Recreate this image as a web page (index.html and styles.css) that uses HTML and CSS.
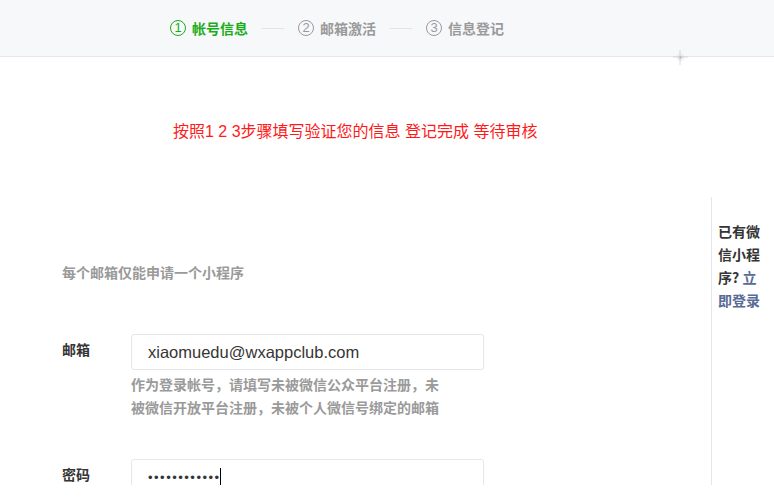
FILE: index.html
```html
<!DOCTYPE html>
<html lang="zh-CN">
<head>
  <meta charset="UTF-8">
  <title>小程序注册</title>
  <link rel="stylesheet" href="styles.css">
</head>
<body>
  <div class="page">
    <div class="steps">
      <div class="step active"><span class="num">1</span>帐号信息</div>
      <div class="step-line"></div>
      <div class="step"><span class="num">2</span>邮箱激活</div>
      <div class="step-line"></div>
      <div class="step"><span class="num">3</span>信息登记</div>
      <div class="sparkle"></div>
    </div>

    <p class="notice">按照1 2 3步骤填写验证您的信息 登记完成 等待审核</p>

    <div class="main">
      <div class="form">
        <p class="tips">每个邮箱仅能申请一个小程序</p>

        <div class="form-row">
          <label for="email">邮箱</label>
          <div class="field">
            <input type="text" id="email" value="xiaomuedu@wxappclub.com">
            <p class="hint">作为登录帐号，请填写未被微信公众平台注册，未被微信开放平台注册，未被个人微信号绑定的邮箱</p>
          </div>
        </div>

        <div class="form-row">
          <label for="pwd">密码</label>
          <div class="field">
            <div class="input pwd">••••••••••••<span class="caret"></span></div>
          </div>
        </div>
      </div>

      <div class="side">
        已有微信小程序?<a href="#"> 立即登录</a>
      </div>
    </div>
  </div>
</body>
</html>
```

FILE: styles.css
```css
html, body { margin: 0; background: #fff; }
body { font-family: "Liberation Sans", "Noto Sans CJK SC", sans-serif; color: #353535; }
.page { height: 485px; overflow: hidden; }

.steps { position: relative; height: 56px; background: #f7f8fa; border-bottom: 1px solid #e7e7eb; display: flex; align-items: center; padding-left: 170px; }
.step { display: flex; align-items: center; font-size: 14px; font-weight: bold; color: #9a9a9a; font-family: "Noto Sans CJK SC", sans-serif; }
.step.active { color: #1aad19; }
.num { width: 14px; height: 14px; border: 1.5px solid currentColor; border-radius: 50%; font-size: 13px; font-weight: normal; line-height: 14px; text-align: center; margin-right: 6px; font-family: "Liberation Sans", sans-serif; }
.step-line { width: 22px; height: 1px; background: #e4e4e8; margin: 0 14px; }
.sparkle { position: absolute; left: 673px; top: 50px; width: 15px; height: 15px;
  background: radial-gradient(circle, rgba(170,170,180,0.8) 0, rgba(200,200,210,0.3) 2px, transparent 5px),
    linear-gradient(to right, transparent 6px, rgba(200,200,210,0.7) 7px, transparent 8px),
    linear-gradient(to bottom, transparent 6px, rgba(200,200,210,0.7) 7px, transparent 8px); }

.notice { margin: 63px 0 53px 173px; font-size: 16px; line-height: 24px; color: #ff1a1a; font-family: "Liberation Sans", "Noto Sans CJK SC", sans-serif; }

.main { display: flex; }
.form { width: 649px; padding-left: 62px; }
.tips { margin: 65px 0 52px; font-size: 14px; line-height: 20px; font-weight: bold; color: #9a9a9a; font-family: "Noto Sans CJK SC", sans-serif; }

.form-row { display: flex; margin-bottom: 40px; }
.form-row label { width: 69px; font-size: 14px; font-weight: bold; line-height: 30px; font-family: "Noto Sans CJK SC", sans-serif; }
.field { width: 353px; }
input, .input { box-sizing: border-box; display: block; width: 353px; height: 36px; padding: 0 16px; border: 1px solid #e7e7eb; border-radius: 3px; font-family: "Liberation Sans", sans-serif; font-size: 16.5px; color: #353535; outline: none; }
.pwd { display: flex; align-items: center; font-size: 13px; letter-spacing: 1.5px; color: #353535; }
.caret { width: 1px; height: 18px; background: #000; margin-left: -1px; }
.hint { margin: 3px 0 0; width: 320px; font-size: 14px; line-height: 23px; font-weight: bold; color: #9a9a9a; font-family: "Noto Sans CJK SC", sans-serif; }

.side { width: 45px; height: 265px; border-left: 1px solid #e7e7eb; padding: 23px 0 0 6px; font-size: 14px; line-height: 23px; font-weight: bold; color: #353535; font-family: "Noto Sans CJK SC", sans-serif; }
.side a { color: #576b95; text-decoration: none; }
```
